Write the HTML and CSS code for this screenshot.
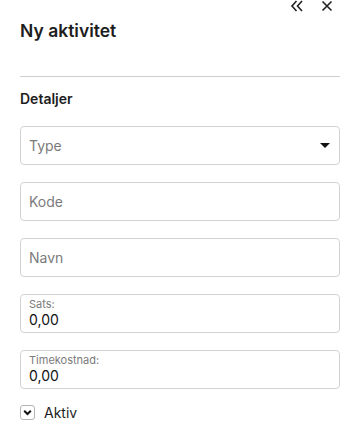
FILE: index.html
```html
<!DOCTYPE html>
<html lang="no">
<head>
  <meta charset="UTF-8">
  <meta name="viewport" content="width=device-width, initial-scale=1.0">
  <title>Ny aktivitet</title>
  <link rel="stylesheet" href="styles.css">
</head>
<body>
  <div class="panel">
    <div class="panel-tools">
      <button class="tool-btn" title="Skjul">
        <svg width="14" height="12" viewBox="0 0 14 12"><path d="M6.5 1 L2 6 L6.5 11 M12 1 L7.5 6 L12 11" fill="none" stroke="#222" stroke-width="1.6"/></svg>
      </button>
      <button class="tool-btn" title="Lukk">
        <svg width="12" height="12" viewBox="0 0 12 12"><path d="M1.5 1.5 L10.5 10.5 M10.5 1.5 L1.5 10.5" fill="none" stroke="#222" stroke-width="1.6"/></svg>
      </button>
    </div>

    <h1 class="panel-title">Ny aktivitet</h1>
    <hr class="divider">

    <h2 class="section-title">Detaljer</h2>

    <div class="field select-field">
      <span class="placeholder">Type</span>
      <span class="caret"></span>
    </div>

    <div class="field">
      <span class="placeholder">Kode</span>
    </div>

    <div class="field">
      <span class="placeholder">Navn</span>
    </div>

    <div class="field filled">
      <span class="field-label">Sats:</span>
      <span class="field-value">0,00</span>
    </div>

    <div class="field filled">
      <span class="field-label">Timekostnad:</span>
      <span class="field-value">0,00</span>
    </div>

    <label class="check-row">
      <span class="checkbox">
        <svg width="9" height="7" viewBox="0 0 9 7"><path d="M1.2 1.8 L4.5 5 L7.8 1.8" fill="none" stroke="#111" stroke-width="2"/></svg>
      </span>
      <span class="check-label">Aktiv</span>
    </label>
  </div>
</body>
</html>
```

FILE: styles.css
```css
body {
  margin: 0;
  background-color: #ffffff;
  font-family: Inter, "Noto Sans", sans-serif;
  color: #1d1d1d;
  overflow: hidden;
}

.panel {
  padding: 0 22px 0 20px;
}

.panel-tools {
  display: flex;
  justify-content: flex-end;
  gap: 17px;
  height: 12px;
  padding-right: 7px;
}

.tool-btn {
  border: none;
  background: none;
  padding: 0;
  height: 12px;
  display: flex;
  align-items: center;
}

.panel-title {
  font-size: 17.5px;
  font-weight: 600;
  margin: 9px 0 0 0;
  line-height: 20px;
}

.divider {
  border: none;
  border-top: 1px solid #cfcfcf;
  margin: 35px 0 0 0;
}

.section-title {
  font-size: 14px;
  font-weight: 600;
  margin: 12px 0 0 0;
  line-height: 20px;
}

.field {
  box-sizing: border-box;
  height: 39px;
  border: 1px solid #d2d2d2;
  border-radius: 4px;
  margin-top: 17px;
  padding: 0 8px;
  display: flex;
  align-items: center;
  font-size: 14px;
}

.select-field {
  margin-top: 17px;
  justify-content: space-between;
}

.placeholder {
  color: #7b7b7b;
}

.caret {
  width: 0;
  height: 0;
  border-left: 5px solid transparent;
  border-right: 5px solid transparent;
  border-top: 5px solid #111;
  margin-right: 1px;
}

.filled {
  flex-direction: column;
  align-items: flex-start;
  justify-content: flex-start;
  padding-top: 2px;
}

.field-label {
  font-size: 11px;
  color: #7b7b7b;
  line-height: 14px;
}

.field-value {
  font-size: 14px;
  color: #111;
  line-height: 18px;
}

.check-row {
  display: flex;
  align-items: center;
  gap: 9px;
  margin-top: 15px;
  font-size: 14px;
}

.checkbox {
  box-sizing: border-box;
  width: 15px;
  height: 15px;
  border: 1px solid #b5b5b5;
  border-radius: 3px;
  display: flex;
  align-items: center;
  justify-content: center;
}
```
